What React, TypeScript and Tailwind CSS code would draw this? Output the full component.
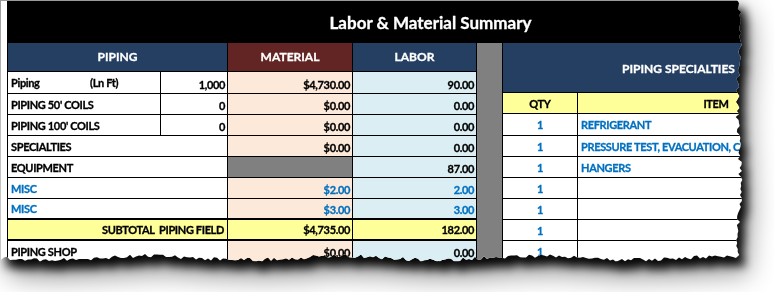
import { useMemo } from 'react'

// torn paper edge along right and bottom side of the screenshot
function tornEdge() {
  let s = 11
  const rnd = () => {
    s = (s * 16807) % 2147483647
    return (s - 1) / 2147483646
  }
  const R = 739
  const B = 258
  const pts: string[] = ['0px 0px']
  for (let y = 0; y <= B; y += 3) {
    const x = R + Math.sin(y / 23) * 1.5 + (rnd() - 0.5) * 4
    pts.push(`${x.toFixed(1)}px ${y}px`)
  }
  for (let x = R; x >= 0; x -= 3) {
    const y = B + Math.sin(x / 31) * 2 + (rnd() - 0.5) * 4
    pts.push(`${x}px ${y.toFixed(1)}px`)
  }
  return `polygon(${pts.join(', ')})`
}

const label = 'flex items-center pl-[3px] border-r border-black'
const value = 'flex items-end justify-end pr-[2px] pb-[3px] border-r border-black'
const head = 'flex items-center justify-center text-white text-[12px] tracking-normal'

export default function App() {
  const clip = useMemo(() => tornEdge(), [])

  return (
    <div className="w-[774px] h-[292px] bg-white overflow-hidden font-['Lato',sans-serif] font-bold text-[11px] tracking-[-0.35px] leading-none text-black [-webkit-text-stroke:0.3px_currentColor]">
      <div className="[filter:drop-shadow(6px_9px_5px_rgba(0,0,0,0.95))_drop-shadow(4px_8px_12px_rgba(0,0,0,0.45))]">
        <div style={{ clipPath: clip }} className="w-[774px] h-[292px] overflow-hidden bg-white border-l border-t border-[#9a9a9a] pl-[6px]">
          <div className="w-[847px] flex flex-col">
            <div className="h-[42px] bg-black flex items-center justify-center text-white text-[17px] tracking-normal">
              Labor &amp; Material Summary
            </div>

            <div className="flex">
              {/* left block: piping / material / labor */}
              <div className="w-[470px] flex flex-col border-l border-black">
                <div className="h-[29px] flex border-b border-black">
                  <div className={`w-[220px] bg-[#243f62] border-r border-black ${head}`}>PIPING</div>
                  <div className={`w-[125px] bg-[#632523] border-r border-black ${head}`}>MATERIAL</div>
                  <div className={`w-[124px] bg-[#243f62] border-r border-black ${head}`}>LABOR</div>
                </div>

                <div className="h-[22px] flex border-b border-black">
                  <div className={`w-[153px] ${label}`}>
                    <span className="w-[79px]">Piping</span>
                    <span>(Ln Ft)</span>
                  </div>
                  <div className={`w-[67px] ${value}`}>1,000</div>
                  <div className={`w-[125px] bg-[#fde9d9] ${value}`}>$4,730.00</div>
                  <div className={`w-[124px] bg-[#daeef3] ${value}`}>90.00</div>
                </div>

                <Row label="PIPING 50' COILS" qty="0" mat="$0.00" lab="0.00" />
                <Row label="PIPING 100' COILS" qty="0" mat="$0.00" lab="0.00" />

                <div className="h-[21px] flex border-b border-black">
                  <div className={`w-[220px] ${label}`}>SPECIALTIES</div>
                  <div className={`w-[125px] bg-[#fde9d9] ${value}`}>$0.00</div>
                  <div className={`w-[124px] bg-[#daeef3] ${value}`}>0.00</div>
                </div>

                <div className="h-[21px] flex border-b border-black">
                  <div className={`w-[220px] ${label}`}>EQUIPMENT</div>
                  <div className="w-[125px] bg-[#808080] border-r border-black" />
                  <div className={`w-[124px] bg-[#daeef3] ${value}`}>87.00</div>
                </div>

                <div className="h-[21px] flex border-b border-black text-[#0070c0]">
                  <div className={`w-[220px] ${label}`}>MISC</div>
                  <div className={`w-[125px] bg-[#fde9d9] ${value}`}>$2.00</div>
                  <div className={`w-[124px] bg-[#daeef3] ${value}`}>2.00</div>
                </div>

                <div className="h-[21px] flex border-b-2 border-black text-[#0070c0]">
                  <div className={`w-[220px] ${label}`}>MISC</div>
                  <div className={`w-[125px] bg-[#fde9d9] ${value}`}>$3.00</div>
                  <div className={`w-[124px] bg-[#daeef3] ${value}`}>3.00</div>
                </div>

                <div className="h-[21px] flex border-b-2 border-black bg-[#ffff99]">
                  <div className="w-[220px] flex items-center justify-end pr-[3px] border-r border-black whitespace-pre">SUBTOTAL  PIPING FIELD</div>
                  <div className="w-[125px] flex items-center justify-end pr-[2px] border-r border-black">$4,735.00</div>
                  <div className="w-[124px] flex items-center justify-end pr-[2px] border-r border-black">182.00</div>
                </div>

                <div className="h-[21px] flex border-b border-black">
                  <div className={`w-[220px] ${label}`}>PIPING SHOP</div>
                  <div className={`w-[125px] bg-[#fde9d9] ${value}`}>$0.00</div>
                  <div className={`w-[124px] bg-[#daeef3] ${value}`}>0.00</div>
                </div>
              </div>

              {/* spacer column */}
              <div className="w-[26px] bg-[#808080] border-r border-black" />

              {/* right block: piping specialties */}
              <div className="w-[351px] flex flex-col">
                <div className={`h-[50px] bg-[#243f62] border-b border-black pt-[2px] ${head}`}>PIPING SPECIALTIES</div>
                <div className="h-[21px] flex border-b border-black bg-[#ffff99]">
                  <div className="w-[75px] flex items-center justify-center border-r border-black">QTY</div>
                  <div className="flex-1 flex items-center justify-center">ITEM</div>
                </div>
                <Spec item="REFRIGERANT" tall />
                <Spec item="PRESSURE TEST, EVACUATION, CHARGE" />
                <Spec item="HANGERS" />
                <Spec item="" />
                <Spec item="" />
                <Spec item="" />
                <Spec item="" />
              </div>
            </div>
          </div>
        </div>
      </div>
    </div>
  )
}

function Row({ label: text, qty, mat, lab }: { label: string; qty: string; mat: string; lab: string }) {
  return (
    <div className="h-[21px] flex border-b border-black">
      <div className={`w-[153px] ${label}`}>{text}</div>
      <div className={`w-[67px] ${value}`}>{qty}</div>
      <div className={`w-[125px] bg-[#fde9d9] ${value}`}>{mat}</div>
      <div className={`w-[124px] bg-[#daeef3] ${value}`}>{lab}</div>
    </div>
  )
}

function Spec({ item, tall }: { item: string; tall?: boolean }) {
  return (
    <div className={`${tall ? 'h-[22px]' : 'h-[21px]'} flex border-b border-black text-[#0070c0]`}>
      <div className="w-[75px] flex items-center justify-center border-r border-black">1</div>
      <div className="flex-1 flex items-center pl-[3px] whitespace-nowrap">{item}</div>
    </div>
  )
}
